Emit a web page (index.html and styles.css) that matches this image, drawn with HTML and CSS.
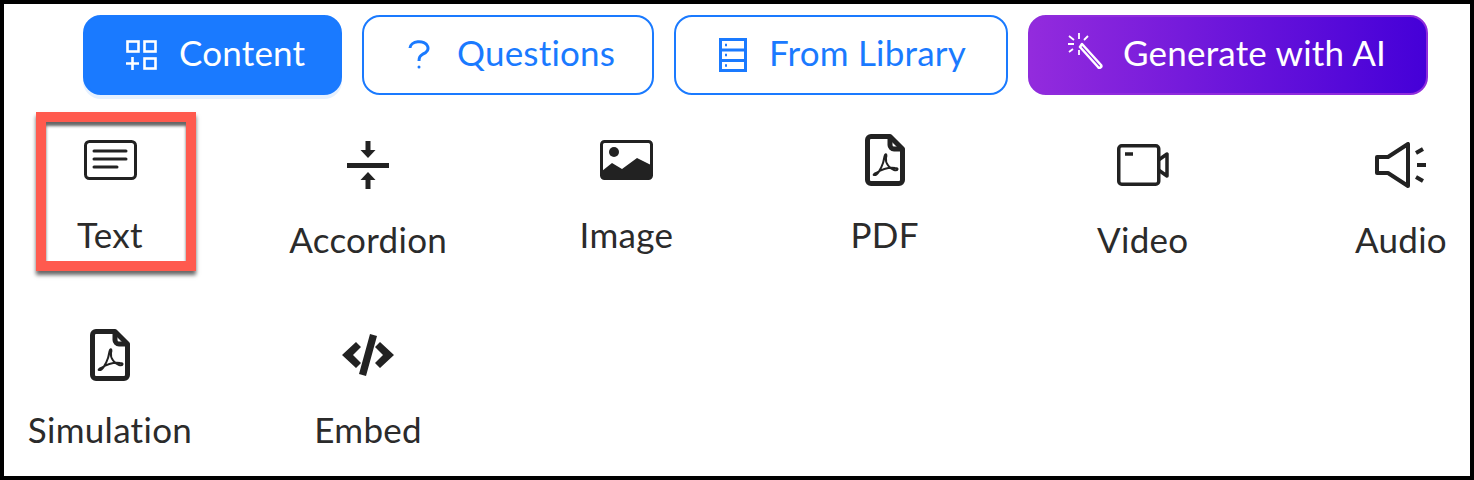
FILE: index.html
```html
<!DOCTYPE html>
<html lang="en">
<head>
  <meta charset="UTF-8">
  <title>Add Content</title>
  <link rel="stylesheet" href="styles.css">
</head>
<body>
  <!-- shared file icon, used by PDF and Simulation -->
  <svg class="defs" width="0" height="0">
    <symbol id="pdf-icon" viewBox="0 0 40 52">
      <path d="M8 2.500h17l12.500 12.500v31a3.500 3.500 0 0 1-3.500 3.500H6a3.500 3.500 0 0 1-3.500-3.500V6a3.500 3.500 0 0 1 3.500-3.500z" fill="none" stroke="#222" stroke-width="5" stroke-linejoin="round"/>
      <path d="M25 2v9a4 4 0 0 0 4 4h9" fill="none" stroke="#222" stroke-width="5"/>
      <path d="M9 41c3 1 7-6 9-12 1-3 1-6 2-8 1-2 2 0 1 3-1 5 4 11 8 12 4 1 5-2 1-2-6-1-14 2-19 5-2 1-3 2-2 2z" fill="none" stroke="#222" stroke-width="2" stroke-linejoin="round"/>
    </symbol>
  </svg>

  <main class="frame">
    <!-- Tabs -->
    <div class="tabs">
      <a class="tab tab-active">
        <svg width="32" height="30" viewBox="0 0 32 30" fill="none" stroke="#fff" stroke-width="2.600">
          <rect x="2.500" y="1.500" width="11" height="10"/>
          <rect x="19.500" y="1.500" width="11" height="10"/>
          <rect x="19.500" y="18.500" width="11" height="10"/>
          <path d="M1 23.500h13M7.500 17v13"/>
        </svg>
        <span>Content</span>
      </a>
      <a class="tab tab-questions">
        <svg width="22" height="30" viewBox="0 0 22 30" fill="none" stroke="#1a7aff" stroke-width="3">
          <path d="M2 8a9 6.500 0 1 1 13 6c-3 2-4 3-4 7"/>
          <circle cx="11" cy="27" r="1.500" fill="#1a7aff" stroke="none"/>
        </svg>
        <span>Questions</span>
      </a>
      <a class="tab tab-library">
        <svg width="28" height="34" viewBox="0 0 28 34" fill="none" stroke="#1a7aff" stroke-width="3">
          <rect x="1.500" y="1.500" width="25" height="31"/>
          <path d="M1.500 12h25M1.500 22.500h25"/>
          <path d="M6 7h2M6 17h2M6 27.500h2" stroke-width="2.500"/>
        </svg>
        <span>From Library</span>
      </a>
      <a class="tab tab-ai">
        <svg width="36" height="36" viewBox="0 0 36 36" fill="none" stroke="#fff">
          <path d="M15 11l19 21a1.500 1.500 0 0 1-3 2L13 14z" stroke-width="2.500" stroke-linejoin="round"/>
          <path d="M12 0v6M12 17v5M1 11h6M2 3l5 4M21 3l-4 4M2 19l4-3" stroke-width="1.800"/>
        </svg>
        <span>Generate with AI</span>
      </a>
    </div>

    <!-- Content types -->
    <div class="tiles">
      <div class="tile">
        <div class="tile-icon">
          <svg width="53" height="40" viewBox="0 0 53 40" fill="none" stroke="#222" stroke-width="3">
            <rect x="1.500" y="1.500" width="50" height="37" rx="4"/>
            <path d="M10 11h32M10 19h32" stroke-linecap="round"/>
            <path d="M10 27h23" stroke-linecap="round"/>
          </svg>
        </div>
        <span class="tile-label">Text</span>
        <div class="highlight"></div>
      </div>

      <div class="tile tile-low">
        <div class="tile-icon">
          <svg width="42" height="49" viewBox="0 0 42 49" fill="#222">
            <rect y="22" width="42" height="5"/>
            <path d="M18.500 0h5v9h5l-7.500 8-7.500-8h5zM18.500 48v-9h-5l7.500-8 7.500 8h-5v9z"/>
          </svg>
        </div>
        <span class="tile-label">Accordion</span>
      </div>

      <div class="tile">
        <div class="tile-icon">
          <svg width="53" height="40" viewBox="0 0 53 40">
            <rect x="1.500" y="1.500" width="50" height="37" rx="3" fill="none" stroke="#222" stroke-width="3"/>
            <circle cx="14" cy="12" r="5" fill="#222"/>
            <path d="M2 31l10-8 10 6 15-11 14 7v12a2 2 0 0 1-2 2H4a2 2 0 0 1-2-2z" fill="#222"/>
          </svg>
        </div>
        <span class="tile-label">Image</span>
      </div>

      <div class="tile">
        <div class="tile-icon">
          <svg width="40" height="52"><use href="#pdf-icon"/></svg>
        </div>
        <span class="tile-label">PDF</span>
      </div>

      <div class="tile tile-low">
        <div class="tile-icon">
          <svg width="52" height="42" viewBox="0 0 52 42" fill="none" stroke="#222" stroke-width="3.500">
            <rect x="1.750" y="1.750" width="40" height="38.500" rx="3"/>
            <path d="M41.500 16l8.500-6v22l-8.500-6" stroke-linejoin="round"/>
            <path d="M8 10h8"/>
          </svg>
        </div>
        <span class="tile-label">Video</span>
      </div>

      <div class="tile tile-low">
        <div class="tile-icon">
          <svg width="52" height="46" viewBox="0 0 52 46" fill="none" stroke="#222" stroke-width="4">
            <path d="M2 15h11L33 2v42L13 31H2z" stroke-linejoin="round"/>
            <path d="M41 11l7-4M42 23h9M41 35l7 4"/>
          </svg>
        </div>
        <span class="tile-label">Audio</span>
      </div>

      <div class="tile">
        <div class="tile-icon">
          <svg width="40" height="52"><use href="#pdf-icon"/></svg>
        </div>
        <span class="tile-label">Simulation</span>
      </div>

      <div class="tile">
        <div class="tile-icon">
          <svg width="52" height="42" viewBox="0 0 52 42" fill="#222">
            <path d="M14 8l5 5-8 8 8 8-5 5L0 21zM38 8l-5 5 8 8-8 8 5 5 14-13zM28 0l7 2-11 40-7-2z"/>
          </svg>
        </div>
        <span class="tile-label">Embed</span>
      </div>
    </div>
  </main>
</body>
</html>
```

FILE: styles.css
```css
* {
  margin: 0;
  padding: 0;
  box-sizing: border-box;
}

body {
  font-family: 'Lato', sans-serif;
  background: #fff;
}

.defs {
  position: absolute;
}

/* Black outline round the whole picture */
.frame {
  height: 480px;
  border: 4px solid #000;
  background: #fff;
  overflow: hidden;
}

/* Tabs */
.tabs {
  display: flex;
  gap: 20px;
  margin-top: 11px;
  padding-left: 79px;
}

.tab {
  display: flex;
  align-items: center;
  gap: 22px;
  height: 80px;
  padding: 0 0 0 40px;
  border: 2px solid #1a7aff;
  border-radius: 18px;
  color: #1a7aff;
  font-size: 35px;
  letter-spacing: 0.2px;
}

.tab span {
  margin-bottom: 6px;
  white-space: nowrap;
}

.tab-active {
  width: 259px;
  background: #1a7aff;
  color: #fff;
  box-shadow: 0 4px 0 #e6f1ff;
}

.tab-questions {
  width: 292px;
  gap: 27px;
  padding-left: 44px;
}

.tab-library {
  width: 334px;
  padding-left: 43px;
}

.tab-ai {
  width: 400px;
  gap: 20px;
  padding-left: 37px;
  background: linear-gradient(to right, #932bdd, #4500d8);
  border-color: #8f2cdc;
  color: #fff;
}

.tab-ai svg {
  margin-bottom: 8px;
}

/* Content type tiles */
.tiles {
  display: grid;
  grid-template-columns: repeat(6, 170px);
  column-gap: 88.2px;
  row-gap: 70px;
  align-items: start;
  margin-top: 39px;
  padding-left: 21px;
}

.tile {
  position: relative;
  display: flex;
  flex-direction: column;
  align-items: center;
}

.tile-low {
  margin-top: 5px;
}

.tile-icon {
  display: flex;
  align-items: center;
  justify-content: center;
  height: 52px;
  margin-bottom: 28px;
}

.tile-label {
  color: #2b2b2b;
  font-size: 35px;
  letter-spacing: 0.3px;
  line-height: 40px;
  white-space: nowrap;
}

/* Red box drawn over the first tile */
.highlight {
  position: absolute;
  top: -22px;
  left: 11px;
  width: 160px;
  height: 159px;
  border: 10px solid #ff5a4e;
  box-shadow: 0 4px 4px rgba(0, 0, 0, 0.6), inset 0 4px 3px rgba(0, 0, 0, 0.6);
}
```
